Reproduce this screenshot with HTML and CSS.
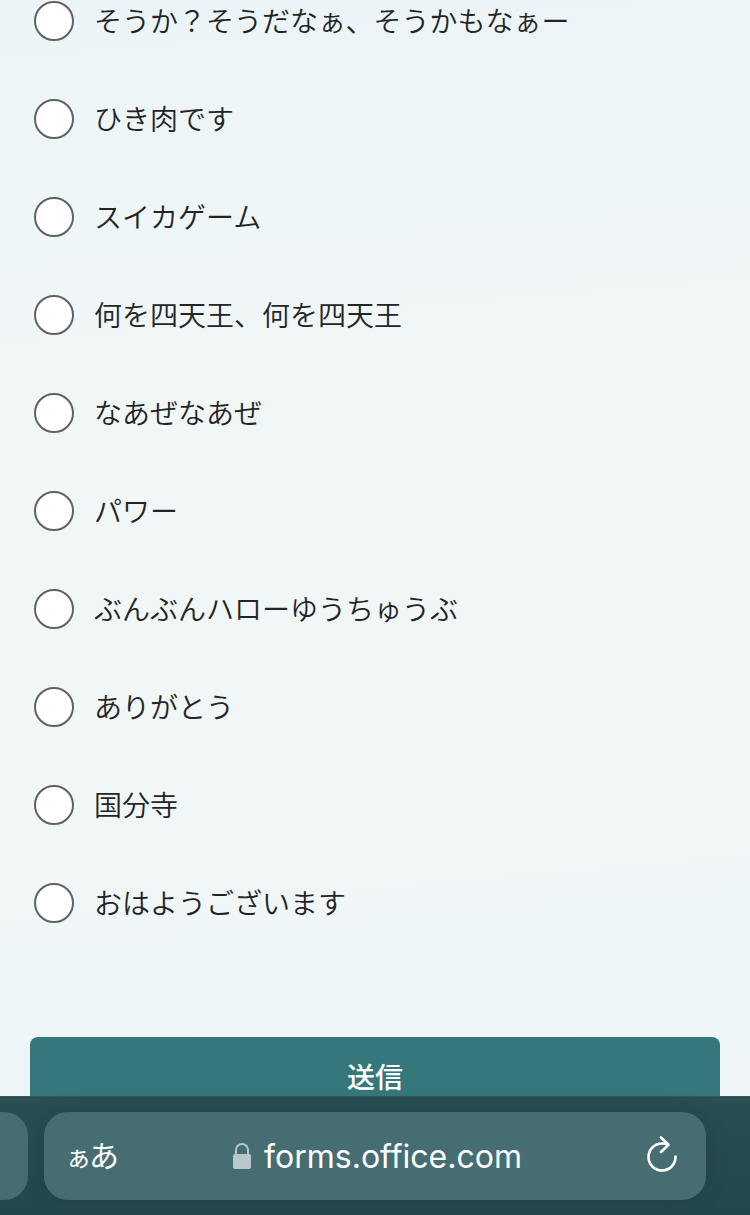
FILE: index.html
```html
<!DOCTYPE html>
<html lang="ja">
<head>
    <meta charset="UTF-8">
    <meta name="viewport" content="width=device-width, initial-scale=1">
    <title>forms.office.com</title>
    <link rel="stylesheet" href="styles.css">
</head>
<body>
    <main class="page">
        <form class="form">
            <div class="choices" role="radiogroup">
                <label class="choice"><input type="radio" name="answer"><span>そうか？そうだなぁ、そうかもなぁー</span></label>
                <label class="choice"><input type="radio" name="answer"><span>ひき肉です</span></label>
                <label class="choice"><input type="radio" name="answer"><span>スイカゲーム</span></label>
                <label class="choice"><input type="radio" name="answer"><span>何を四天王、何を四天王</span></label>
                <label class="choice"><input type="radio" name="answer"><span>なあぜなあぜ</span></label>
                <label class="choice"><input type="radio" name="answer"><span>パワー</span></label>
                <label class="choice"><input type="radio" name="answer"><span>ぶんぶんハローゆうちゅうぶ</span></label>
                <label class="choice"><input type="radio" name="answer"><span>ありがとう</span></label>
                <label class="choice"><input type="radio" name="answer"><span>国分寺</span></label>
                <label class="choice"><input type="radio" name="answer"><span>おはようございます</span></label>
            </div>
            <button class="submit" type="submit">送信</button>
        </form>
    </main>

    <footer class="browser-bar">
        <div class="previous-tab"></div>
        <div class="address">
            <button class="text-size" type="button"><span class="small">ぁ</span>あ</button>
            <a class="url" href="#">
                <svg width="20" height="28" viewBox="0 0 20 28" aria-hidden="true">
                    <path d="M4 13V8a6 6 0 0 1 12 0v5" fill="none" stroke="#b9c7cf" stroke-width="2"/>
                    <rect x="1" y="12" width="18" height="15" rx="2" fill="#b9c7cf"/>
                </svg>
                <span>forms.office.com</span>
            </a>
            <button class="reload" type="button" aria-label="再読み込み">
                <svg width="36" height="40" viewBox="0 0 36 40" aria-hidden="true">
                    <path d="M29.500 20.500A13.500 13.500 0 1 1 16 7.500Q19 7.500 22.500 8.700M15 1.500L22.500 8.700L15 16" fill="none" stroke="#fff" stroke-width="2.600" stroke-linecap="round" stroke-linejoin="round"/>
                </svg>
            </button>
        </div>
    </footer>
</body>
</html>
```

FILE: styles.css
```css
* {
    box-sizing: border-box;
}
body {
    margin: 0;
    height: 100vh;
    display: flex;
    flex-direction: column;
    font-family: "Noto Sans CJK JP", sans-serif;
    color: #242424;
    background-color: #f0f6f7;
}
button {
    border: none;
    padding: 0;
    font-family: inherit;
    color: #fff;
    cursor: pointer;
}
.page {
    flex: 1;
    min-height: 0;
    overflow: hidden;
    background: linear-gradient(175deg, #ebf4f7 0%, #eff6f7 20%, #f1f7f7 40%, #f1f7f7 75%, #edf5f8 92%, #f0f6f7 100%);
}
.form {
    padding: 1px 30px 0;
}
.choices {
    display: flex;
    flex-direction: column;
    gap: 58px;
    padding: 0 4px;
}
.choice {
    display: flex;
    align-items: flex-start;
    gap: 20px;
    height: 40px;
    font-size: 28px;
    font-weight: 350;
    line-height: 38px;
}
.choice input {
    appearance: none;
    flex: none;
    width: 40px;
    height: 40px;
    margin: 0;
    border: 2px solid #616161;
    border-radius: 50%;
    background-color: #fff;
}
.choice input:checked {
    border-width: 12px;
    border-color: #36777b;
}
.submit {
    display: block;
    width: 100%;
    height: 80px;
    margin-top: 114px;
    padding-bottom: 2px;
    border-radius: 8px;
    background-color: #36777b;
    font-size: 28px;
    font-weight: 500;
}
.browser-bar {
    display: flex;
    gap: 16px;
    padding: 15px 44px 15px 0;
    border-top: 1px solid #345659;
    background: linear-gradient(#294f52, #23484c);
}
.previous-tab {
    width: 28px;
    border-radius: 0 24px 24px 0;
    background-color: #466e72;
}
.address {
    flex: 1;
    display: grid;
    grid-template-columns: 1fr auto 1fr;
    align-items: center;
    height: 88px;
    padding: 0 24px;
    border-radius: 24px;
    background-color: #466e72;
    box-shadow: 0 0 24px rgba(0, 0, 0, 0.12);
}
.text-size {
    justify-self: start;
    padding-bottom: 4px;
    background: none;
    font-size: 30px;
    font-feature-settings: "palt";
}
.text-size .small {
    font-size: 26px;
}
.url {
    display: flex;
    align-items: center;
    gap: 12px;
    padding-left: 4px;
    font-family: Inter, sans-serif;
    font-size: 32px;
    color: #fff;
    text-decoration: none;
}
.reload {
    justify-self: end;
    background: none;
}
.reload svg {
    display: block;
}
```
